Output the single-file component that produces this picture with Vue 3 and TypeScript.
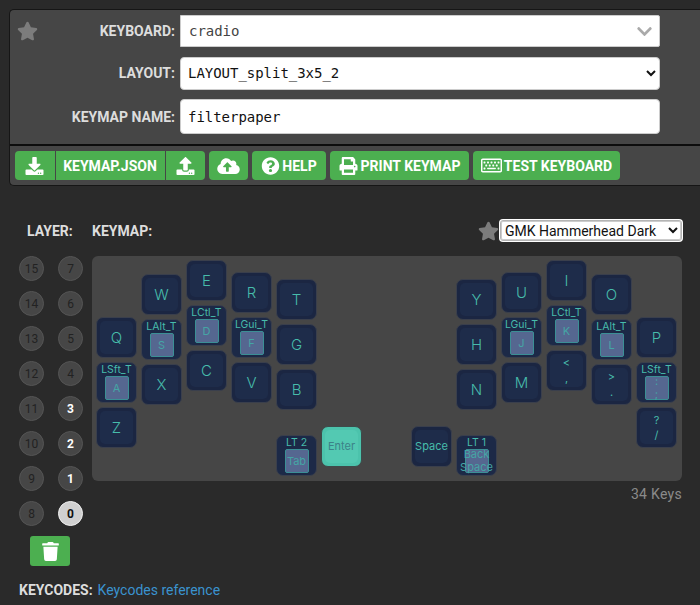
<script setup lang="ts">
interface Key {
  x: number
  y: number
  label: string
  sub?: string
  small?: boolean
  accent?: boolean
}

const keys: Key[] = [
  { x: 96, y: 317, label: 'Q' },
  { x: 141, y: 274, label: 'W' },
  { x: 186, y: 260, label: 'E' },
  { x: 231, y: 272, label: 'R' },
  { x: 276, y: 279, label: 'T' },
  { x: 456, y: 279, label: 'Y' },
  { x: 501, y: 272, label: 'U' },
  { x: 546, y: 260, label: 'I' },
  { x: 591, y: 274, label: 'O' },
  { x: 636, y: 317, label: 'P' },
  { x: 96, y: 362, label: 'LSft_T', sub: 'A' },
  { x: 141, y: 319, label: 'LAlt_T', sub: 'S' },
  { x: 186, y: 305, label: 'LCtl_T', sub: 'D' },
  { x: 231, y: 317, label: 'LGui_T', sub: 'F' },
  { x: 276, y: 324, label: 'G' },
  { x: 456, y: 324, label: 'H' },
  { x: 501, y: 317, label: 'LGui_T', sub: 'J' },
  { x: 546, y: 305, label: 'LCtl_T', sub: 'K' },
  { x: 591, y: 319, label: 'LAlt_T', sub: 'L' },
  { x: 636, y: 362, label: 'LSft_T', sub: ':\n;' },
  { x: 96, y: 407, label: 'Z' },
  { x: 141, y: 364, label: 'X' },
  { x: 186, y: 350, label: 'C' },
  { x: 231, y: 362, label: 'V' },
  { x: 276, y: 369, label: 'B' },
  { x: 456, y: 369, label: 'N' },
  { x: 501, y: 362, label: 'M' },
  { x: 546, y: 350, label: '<\n,', small: true },
  { x: 591, y: 364, label: '>\n.', small: true },
  { x: 636, y: 407, label: '?\n/', small: true },
  { x: 276, y: 435, label: 'LT 2', sub: 'Tab' },
  { x: 321, y: 426, label: 'Enter', small: true, accent: true },
  { x: 411, y: 426, label: 'Space', small: true },
  { x: 456, y: 435, label: 'LT 1', sub: 'Back\nSpace' }
]

const layers: number[] = [15, 7, 14, 6, 13, 5, 12, 4, 11, 3, 10, 2, 9, 1, 8, 0]
const usedLayers: number[] = [3, 2, 1]
const currentLayer = 0

const CANVAS_X = 92
const CANVAS_Y = 256

const keyPos = (k: Key) => ({
  left: `${k.x - CANVAS_X}px`,
  top: `${k.y - CANVAS_Y}px`
})

const starPath = 'M259.3 17.8L194 150.2 47.9 171.5c-26.2 3.8-36.7 36.1-17.7 54.6l105.7 103-25 145.5c-4.5 26.3 23.2 46 46.4 33.7L288 439.6l130.7 68.7c23.2 12.2 50.9-7.4 46.4-33.7l-25-145.5 105.7-103c19-18.5 8.5-50.8-17.7-54.6L382 150.2 316.7 17.8c-11.7-23.6-45.6-23.9-57.4 0z'
</script>

<template>
  <div class="page">
    <div class="topPanel">
      <svg class="favStar" viewBox="0 0 576 512"><path :d="starPath" /></svg>
      <div class="form">
        <label class="formLabel">KEYBOARD:</label>
        <div class="keyboardBox">
          <span>cradio</span>
          <svg class="chevron" viewBox="0 0 448 512"><path d="M207.029 381.476L12.686 187.132c-9.373-9.373-9.373-24.569 0-33.941l22.667-22.667c9.357-9.357 24.522-9.375 33.901-.04L224 284.505l154.745-154.021c9.379-9.335 24.544-9.317 33.901.04l22.667 22.667c9.373 9.373 9.373 24.569 0 33.941L240.971 381.476c-9.373 9.372-24.569 9.372-33.942 0z" /></svg>
        </div>
        <label class="formLabel">LAYOUT:</label>
        <select class="layoutSelect">
          <option>LAYOUT_split_3x5_2</option>
        </select>
        <label class="formLabel">KEYMAP NAME:</label>
        <input class="nameInput" type="text" value="filterpaper" />
      </div>
      <div class="toolbar">
        <div class="btnGroup">
          <button class="btn iconBtn">
            <svg class="icon" viewBox="0 0 512 512"><path d="M216 0h80c13.3 0 24 10.7 24 24v168h87.7c17.8 0 26.7 21.5 14.1 34.1L269.7 378.3c-7.5 7.5-19.8 7.5-27.3 0L90.1 226.1c-12.6-12.6-3.7-34.1 14.1-34.1H192V24c0-13.3 10.7-24 24-24zm296 376v112c0 13.3-10.7 24-24 24H24c-13.3 0-24-10.7-24-24V376c0-13.3 10.7-24 24-24h146.7l49 49c20.1 20.1 52.5 20.1 72.6 0l49-49H488c13.3 0 24 10.7 24 24zm-124 88c0-11-9-20-20-20s-20 9-20 20 9 20 20 20 20-9 20-20zm64 0c0-11-9-20-20-20s-20 9-20 20 9 20 20 20 20-9 20-20z" /></svg>
          </button>
          <button class="btn jsonBtn">KEYMAP.JSON</button>
          <button class="btn iconBtn">
            <svg class="icon" viewBox="0 0 512 512"><path d="M296 384h-80c-13.3 0-24-10.7-24-24V192h-87.7c-17.8 0-26.7-21.5-14.1-34.1L242.3 5.7c7.5-7.5 19.8-7.5 27.3 0l152.2 152.2c12.6 12.6 3.7 34.1-14.1 34.1H320v168c0 13.3-10.7 24-24 24zm216-8v112c0 13.3-10.7 24-24 24H24c-13.3 0-24-10.7-24-24V376c0-13.3 10.7-24 24-24h136v8c0 30.9 25.1 56 56 56h80c30.9 0 56-25.1 56-56v-8h136c13.3 0 24 10.7 24 24zm-124 88c0-11-9-20-20-20s-20 9-20 20 9 20 20 20 20-9 20-20zm64 0c0-11-9-20-20-20s-20 9-20 20 9 20 20 20 20-9 20-20z" /></svg>
          </button>
        </div>
        <button class="btn single cloudBtn">
          <svg class="iconWide" viewBox="0 0 640 512"><path d="M537.6 226.6c4.1-10.7 6.4-22.4 6.4-34.6 0-53-43-96-96-96-19.7 0-38.1 6-53.3 16.2C367 64.2 315.3 32 256 32c-88.4 0-160 71.6-160 160 0 2.7.1 5.4.2 8.1C40.2 219.8 0 273.2 0 336c0 79.5 64.5 144 144 144h368c70.7 0 128-57.3 128-128 0-61.9-44-113.6-102.4-125.4zM393.4 288H328v112c0 8.8-7.2 16-16 16h-48c-8.8 0-16-7.2-16-16V288h-65.4c-14.3 0-21.4-17.2-11.3-27.3l105.4-105.4c6.2-6.2 16.4-6.2 22.6 0l105.4 105.4c10.1 10.1 2.9 27.3-11.3 27.3z" /></svg>
        </button>
        <button class="btn single helpBtn">
          <svg class="icon" viewBox="0 0 512 512"><path d="M504 256c0 136.997-111.043 248-248 248S8 392.997 8 256C8 119.083 119.043 8 256 8s248 111.083 248 248zM262.655 90c-54.497 0-89.255 22.957-116.549 63.758-3.536 5.286-2.353 12.415 2.715 16.258l34.699 26.31c5.205 3.947 12.621 3.008 16.665-2.122 17.864-22.658 30.113-35.797 57.303-35.797 20.429 0 45.698 13.148 45.698 32.958 0 14.976-12.363 22.667-32.534 33.976C247.128 238.528 216 254.941 216 296v4c0 6.627 5.373 12 12 12h56c6.627 0 12-5.373 12-12v-1.333c0-28.462 83.186-29.647 83.186-106.667 0-58.002-60.165-102-116.531-102zM256 338c-25.365 0-46 20.635-46 46 0 25.364 20.635 46 46 46s46-20.636 46-46c0-25.365-20.635-46-46-46z" /></svg>
          HELP
        </button>
        <button class="btn single printBtn">
          <svg class="icon" viewBox="0 0 512 512"><path d="M448 192V77.25c0-8.49-3.37-16.62-9.37-22.63L393.37 9.37c-6-6-14.14-9.37-22.63-9.37H96C78.33 0 64 14.33 64 32v160c-35.35 0-64 28.65-64 64v112c0 8.84 7.16 16 16 16h48v96c0 17.67 14.33 32 32 32h320c17.67 0 32-14.33 32-32v-96h48c8.84 0 16-7.16 16-16V256c0-35.35-28.65-64-64-64zm-64 256H128v-96h256v96zm0-224H128V64h192v48c0 8.84 7.16 16 16 16h48v96zm48 72c-13.25 0-24-10.75-24-24 0-13.26 10.75-24 24-24s24 10.74 24 24c0 13.25-10.75 24-24 24z" /></svg>
          PRINT KEYMAP
        </button>
        <button class="btn single testBtn">
          <svg class="iconKb" viewBox="0 0 576 512"><path d="M528 64H48C21.49 64 0 85.49 0 112v288c0 26.51 21.49 48 48 48h480c26.51 0 48-21.49 48-48V112c0-26.51-21.49-48-48-48zm8 336c0 4.411-3.589 8-8 8H48c-4.411 0-8-3.589-8-8V112c0-4.411 3.589-8 8-8h480c4.411 0 8 3.589 8 8v288zM170 270v-28c0-6.627-5.373-12-12-12h-28c-6.627 0-12 5.373-12 12v28c0 6.627 5.373 12 12 12h28c6.627 0 12-5.373 12-12zm96 0v-28c0-6.627-5.373-12-12-12h-28c-6.627 0-12 5.373-12 12v28c0 6.627 5.373 12 12 12h28c6.627 0 12-5.373 12-12zm96 0v-28c0-6.627-5.373-12-12-12h-28c-6.627 0-12 5.373-12 12v28c0 6.627 5.373 12 12 12h28c6.627 0 12-5.373 12-12zm96 0v-28c0-6.627-5.373-12-12-12h-28c-6.627 0-12 5.373-12 12v28c0 6.627 5.373 12 12 12h28c6.627 0 12-5.373 12-12zm-336 82v-28c0-6.627-5.373-12-12-12H82c-6.627 0-12 5.373-12 12v28c0 6.627 5.373 12 12 12h28c6.627 0 12-5.373 12-12zm384 0v-28c0-6.627-5.373-12-12-12h-28c-6.627 0-12 5.373-12 12v28c0 6.627 5.373 12 12 12h28c6.627 0 12-5.373 12-12zM122 188v-28c0-6.627-5.373-12-12-12H82c-6.627 0-12 5.373-12 12v28c0 6.627 5.373 12 12 12h28c6.627 0 12-5.373 12-12zm96 0v-28c0-6.627-5.373-12-12-12h-28c-6.627 0-12 5.373-12 12v28c0 6.627 5.373 12 12 12h28c6.627 0 12-5.373 12-12zm96 0v-28c0-6.627-5.373-12-12-12h-28c-6.627 0-12 5.373-12 12v28c0 6.627 5.373 12 12 12h28c6.627 0 12-5.373 12-12zm96 0v-28c0-6.627-5.373-12-12-12h-28c-6.627 0-12 5.373-12 12v28c0 6.627 5.373 12 12 12h28c6.627 0 12-5.373 12-12zm96 0v-28c0-6.627-5.373-12-12-12h-28c-6.627 0-12 5.373-12 12v28c0 6.627 5.373 12 12 12h28c6.627 0 12-5.373 12-12zm-98 158v-16c0-6.627-5.373-12-12-12H180c-6.627 0-12 5.373-12 12v16c0 6.627 5.373 12 12 12h216c6.627 0 12-5.373 12-12z" /></svg>
          TEST KEYBOARD
        </button>
      </div>
    </div>

    <div class="headerRow">
      <span class="layerTitle">LAYER:</span>
      <span class="keymapTitle">KEYMAP:</span>
      <svg class="themeStar" viewBox="0 0 576 512"><path :d="starPath" /></svg>
      <select class="themeSelect">
        <option>GMK Hammerhead Dark</option>
      </select>
    </div>

    <div class="body">
      <div class="layerCol">
        <div class="layerGrid">
          <div
            v-for="n in layers"
            :key="n"
            class="layerBtn"
            :class="{ used: usedLayers.includes(n), current: n === currentLayer }"
          >{{ n }}</div>
        </div>
        <button class="trashBtn">
          <svg viewBox="0 0 448 512"><path d="M432 32H312l-9.4-18.7A24 24 0 0 0 281.1 0H166.8a23.72 23.72 0 0 0-21.4 13.3L136 32H16A16 16 0 0 0 0 48v32a16 16 0 0 0 16 16h416a16 16 0 0 0 16-16V48a16 16 0 0 0-16-16zM53.2 467a48 48 0 0 0 47.9 45h245.8a48 48 0 0 0 47.9-45L416 128H32z" /></svg>
        </button>
      </div>
      <div class="keymapCol">
        <div class="canvas">
          <div
            v-for="k in keys"
            :key="`${k.x}-${k.y}`"
            class="key"
            :class="{ accent: k.accent, mod: !!k.sub, small: k.small }"
            :style="keyPos(k)"
          >
            <div class="keyFace">
              <span class="keyLabel">{{ k.label }}</span>
            </div>
            <div v-if="k.sub" class="subKey">{{ k.sub }}</div>
          </div>
        </div>
        <div class="keyCount">34 Keys</div>
      </div>
    </div>

    <div class="keycodes">
      <span class="keycodesTitle">KEYCODES:</span>
      <a class="keycodesLink" href="#">Keycodes reference</a>
    </div>
  </div>
</template>

<style>
html, body {
  margin: 0;
  background: #2a2a2a;
  overflow: hidden;
}
</style>

<style scoped>
.page {
  width: 700px;
  height: 605px;
  overflow: hidden;
  box-sizing: border-box;
  padding-top: 9px;
  background: #2a2a2a;
  font-family: Roboto, "Liberation Sans", sans-serif;
  font-size: 14px;
  color: #ddd;
}

.topPanel {
  position: relative;
  margin-left: 9px;
  border: 1px solid #161616;
  border-right: none;
  border-radius: 5px 0 0 5px;
  background: #464646;
}

.favStar {
  position: absolute;
  left: 7px;
  top: 11px;
  width: 21px;
  height: 20px;
  fill: #7c7c7c;
}

.form {
  display: grid;
  grid-template-columns: 165px 480px;
  grid-template-rows: 32px 33px 35px;
  column-gap: 5px;
  row-gap: 9.5px;
  align-items: center;
  padding: 5px 0 10px;
  border-bottom: 2px solid #0d0d0d;
}

.formLabel {
  text-align: right;
  font-weight: 700;
  font-size: 14px;
  color: #ddd;
}

.keyboardBox {
  height: 100%;
  box-sizing: border-box;
  display: flex;
  align-items: center;
  justify-content: space-between;
  padding: 0 7px 0 8px;
  background: #fff;
  border: 1px solid #ccc;
  border-radius: 0 2px 2px 0;
  font-family: "DejaVu Sans Mono", monospace;
  font-size: 14px;
  letter-spacing: -0.03px;
  color: #444;
}

.chevron {
  width: 15px;
  height: 17px;
  fill: #aaa;
}

.layoutSelect,
.nameInput {
  height: 100%;
  width: 100%;
  box-sizing: border-box;
  margin: 0;
  background: #fff;
  border: 1px solid #ccc;
  border-radius: 4px;
  font-family: "DejaVu Sans Mono", monospace;
  font-size: 14px;
  letter-spacing: -0.03px;
  color: #111;
  outline: none;
}

.layoutSelect {
  padding-left: 3px;
}

.nameInput {
  padding: 0 7px;
}

.toolbar {
  display: flex;
  gap: 4px;
  padding: 5px;
}

.btnGroup {
  display: flex;
  gap: 1px;
}

.btn {
  display: flex;
  align-items: center;
  justify-content: center;
  gap: 2px;
  height: 29px;
  margin: 0;
  padding: 0 9px;
  border: none;
  background: #4caf50;
  color: #fff;
  font-family: Roboto, "Liberation Sans", sans-serif;
  font-size: 14px;
  font-weight: 700;
  white-space: nowrap;
}

.btn.single {
  border-radius: 4px;
}

.btnGroup .btn:first-child {
  border-radius: 4px 0 0 4px;
}

.btnGroup .btn:last-child {
  border-radius: 0 4px 4px 0;
}

.btn svg {
  fill: #fff;
  flex: none;
}

.iconBtn {
  width: 39.5px;
  padding: 0;
}

.jsonBtn {
  width: 109px;
  padding: 0;
}

.cloudBtn {
  width: 39px;
  padding: 0;
}

.helpBtn {
  width: 74px;
  padding: 0;
}

.printBtn {
  width: 139px;
  padding: 0;
  gap: 3px;
}

.testBtn {
  width: 147px;
  padding: 0;
}

.icon {
  width: 19px;
  height: 18px;
}

.iconWide {
  width: 23px;
  height: 18px;
}

.iconKb {
  width: 21px;
  height: 21px;
}

.headerRow {
  display: flex;
  align-items: center;
  height: 21px;
  margin-top: 34px;
  font-weight: 700;
}

.layerTitle {
  margin-left: 27px;
  width: 65px;
}

.keymapTitle {
  flex: 1;
}

.themeStar {
  width: 21px;
  height: 20px;
  margin-right: 1px;
  fill: #7c7c7c;
}

.themeSelect {
  width: 182px;
  height: 21px;
  margin: 0 18px 0 0;
  box-sizing: border-box;
  background: #fff;
  border: 1px solid #b4b4b4;
  box-shadow: 0 0 0 1px #fff, inset 0 0 0 1px #ccc;
  border-radius: 3px;
  font-family: Roboto, sans-serif;
  font-size: 14px;
  color: #111;
  outline: none;
}

.body {
  display: flex;
  align-items: flex-start;
  margin-top: 15px;
}

.layerCol {
  width: 92px;
  flex: none;
  display: flex;
  flex-direction: column;
}

.layerGrid {
  display: grid;
  grid-template-columns: 25px 25px;
  column-gap: 14px;
  row-gap: 10px;
  margin-left: 19px;
}

.layerBtn {
  width: 25px;
  height: 25px;
  box-sizing: border-box;
  display: flex;
  align-items: center;
  justify-content: center;
  border: 1px solid #555;
  border-radius: 50%;
  background: #464646;
  color: #222;
  font-size: 12px;
}

.layerBtn.used {
  color: #fff;
  font-weight: 700;
}

.layerBtn.current {
  background: #d0d0d0;
  border-color: #f0f0f0;
  color: #111;
  font-weight: 700;
}

.trashBtn {
  display: flex;
  align-items: center;
  justify-content: center;
  width: 40px;
  height: 30px;
  margin: 10px 0 0 30px;
  padding: 0;
  border: none;
  border-radius: 3px;
  background: #4caf50;
}

.trashBtn svg {
  width: 17px;
  height: 19px;
  fill: #fff;
}

.keymapCol {
  width: 590px;
}

.canvas {
  position: relative;
  height: 225px;
  border-radius: 6px;
  background: #464646;
}

.key {
  position: absolute;
  width: 41px;
  height: 41px;
  box-sizing: border-box;
  padding: 3px;
  border: 1px solid #3a3f4c;
  border-radius: 7px;
  background: #1b2642;
  font-family: Inter, "Open Sans", sans-serif;
  color: #47bcab;
}

.keyFace {
  height: 100%;
  display: flex;
  align-items: center;
  justify-content: center;
  border-radius: 5px;
  background: #1e2c4a;
  font-size: 15px;
  font-weight: 300;
  white-space: pre-line;
  text-align: center;
}

.key.small .keyFace {
  font-size: 11px;
  font-weight: 400;
  line-height: 15px;
}

.key.mod {
  background: #1c2947;
}

.key.mod .keyFace {
  height: 12px;
  align-items: flex-start;
  background: none;
  font-size: 10.5px;
  font-weight: 400;
  line-height: 12px;
  margin: -2px -4px 0;
}

.subKey {
  position: absolute;
  left: 7.5px;
  top: 13px;
  width: 24px;
  height: 24px;
  box-sizing: border-box;
  display: flex;
  align-items: center;
  justify-content: center;
  border: 1px solid #3b8f95;
  border-radius: 2px;
  background: #556790;
  color: #45a5a5;
  font-size: 11px;
  line-height: 13px;
  white-space: pre-line;
  text-align: center;
}

.key.accent {
  background: #4cc3ac;
  border-color: #3e4a4a;
  color: #3c8288;
}

.key.accent .keyFace {
  background: #53c9b2;
}

.keyCount {
  margin-top: 5px;
  text-align: right;
  font-size: 14px;
  letter-spacing: 0.3px;
  color: #8a8a8a;
}

.keycodes {
  display: flex;
  gap: 5px;
  margin: 14px 0 0 19px;
  line-height: 20px;
}

.keycodesTitle {
  font-weight: 700;
}

.keycodesLink {
  color: #3a93cf;
  text-decoration: none;
}
</style>
